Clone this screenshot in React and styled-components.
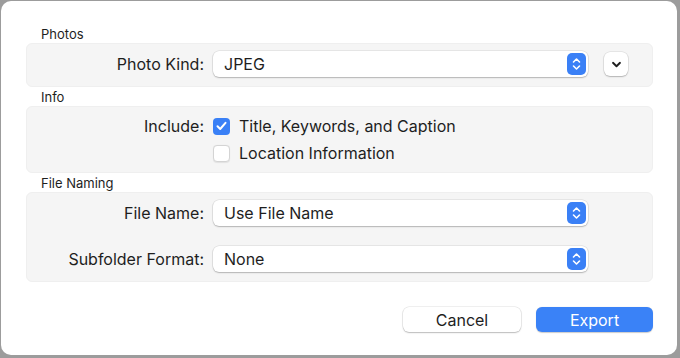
import React, { useState } from "react";
import styled, { createGlobalStyle } from "styled-components";

const GlobalStyle = createGlobalStyle`
  html, body {
    margin: 0;
    padding: 0;
    background: #9c9c9c;
    font-family: Inter, "Liberation Sans", sans-serif;
    -webkit-font-smoothing: antialiased;
  }
`;

const Dialog = styled.div`
  box-sizing: border-box;
  width: 676px;
  height: 354px;
  margin: 1px 0 0 1px;
  background: #ffffff;
  border-radius: 10px;
  padding: 25px 24px 0 25px;
  color: #1e1e1e;
`;

const SectionTitle = styled.div`
  font-size: 13px;
  line-height: 16px;
  padding-left: 15px;
  margin-bottom: 1px;
`;

const Group = styled.div`
  box-sizing: border-box;
  background: #f5f5f5;
  border: 1px solid #efefef;
  border-radius: 6px;
  padding: ${(p) => p.$pad || "7px 0 9px"};
  display: flex;
  flex-direction: column;
  gap: ${(p) => p.$gap || "0px"};
  margin-bottom: 2px;
`;

const Row = styled.div`
  display: grid;
  grid-template-columns: 177px max-content max-content;
  justify-content: start;
  align-items: center;
  column-gap: 9px;
  height: ${(p) => p.$h || "26px"};
`;

const Label = styled.div`
  font-size: 16px;
  text-align: right;
`;

const Popup = styled.div`
  box-sizing: border-box;
  width: 375px;
  height: 26px;
  background: #ffffff;
  border-radius: 6px;
  box-shadow: 0 0 0 0.5px rgba(0, 0, 0, 0.12), 0 1px 1.5px rgba(0, 0, 0, 0.22);
  display: flex;
  align-items: center;
  justify-content: space-between;
  padding: 0 2px 0 11px;
  font-size: 16px;
`;

const Stepper = styled.div`
  width: 19px;
  height: 22px;
  border-radius: 5px;
  background: #3a80f6;
  display: flex;
  align-items: center;
  justify-content: center;
`;

const SmallButton = styled.div`
  width: 24px;
  height: 24px;
  margin-left: 7px;
  background: #ffffff;
  border-radius: 6px;
  box-shadow: 0 0 0 0.5px rgba(0, 0, 0, 0.12), 0 1px 1.5px rgba(0, 0, 0, 0.22);
  display: flex;
  align-items: center;
  justify-content: center;
`;

const CheckLine = styled.label`
  display: flex;
  align-items: center;
  gap: 9px;
  font-size: 16px;
  cursor: default;
`;

const Box = styled.span`
  box-sizing: border-box;
  width: 17px;
  height: 17px;
  border-radius: 4px;
  display: flex;
  align-items: center;
  justify-content: center;
  background: ${(p) => (p.$on ? "#3a80f6" : "#ffffff")};
  border: ${(p) => (p.$on ? "none" : "1px solid #d4d4d4")};
  box-shadow: ${(p) => (p.$on ? "none" : "0 0.5px 1px rgba(0,0,0,0.08)")};
`;

const Footer = styled.div`
  display: flex;
  justify-content: flex-end;
  gap: 15px;
  margin-top: 25px;
`;

const Button = styled.button`
  box-sizing: border-box;
  width: ${(p) => p.$w};
  height: 25px;
  border-radius: 6px;
  border: none;
  font-family: inherit;
  font-size: 16px;
  padding: 0;
  color: ${(p) => (p.$primary ? "#ffffff" : "#1e1e1e")};
  background: ${(p) => (p.$primary ? "#3a82f7" : "#ffffff")};
  box-shadow: ${(p) =>
    p.$primary
      ? "0 0.5px 1px rgba(0,0,0,0.2)"
      : "0 0 0 0.5px rgba(0,0,0,0.12), 0 1px 1.5px rgba(0,0,0,0.22)"};
`;

const StepperIcon = () => (
  <svg width="9" height="14" viewBox="0 0 9 14" fill="none">
    <path d="M1.5 5 L4.5 2 L7.5 5" stroke="#fff" strokeWidth="1.6" strokeLinecap="round" strokeLinejoin="round" />
    <path d="M1.5 9 L4.5 12 L7.5 9" stroke="#fff" strokeWidth="1.6" strokeLinecap="round" strokeLinejoin="round" />
  </svg>
);

const Select = ({ value }) => (
  <Popup>
    <span>{value}</span>
    <Stepper>
      <StepperIcon />
    </Stepper>
  </Popup>
);

const Checkbox = ({ on, children, onToggle }) => (
  <CheckLine onClick={onToggle}>
    <Box $on={on}>
      {on && (
        <svg width="11" height="10" viewBox="0 0 11 10" fill="none">
          <path d="M1.5 5.3 L4.2 8 L9.5 1.8" stroke="#fff" strokeWidth="2" strokeLinecap="round" strokeLinejoin="round" />
        </svg>
      )}
    </Box>
    {children}
  </CheckLine>
);

const App = () => {
  const [title, setTitle] = useState(true);
  const [location, setLocation] = useState(false);

  return (
    <>
      <GlobalStyle />
      <Dialog>
        <SectionTitle>Photos</SectionTitle>
        <Group $pad="7px 0 9px">
          <Row>
            <Label>Photo Kind:</Label>
            <Select value="JPEG" />
            <SmallButton>
              <svg width="11" height="7" viewBox="0 0 11 7" fill="none">
                <path d="M2 1.8 L5.5 5.2 L9 1.8" stroke="#1e1e1e" strokeWidth="1.9" strokeLinecap="round" strokeLinejoin="round" />
              </svg>
            </SmallButton>
          </Row>
        </Group>

        <SectionTitle>Info</SectionTitle>
        <Group $pad="8px 0 8px" $gap="5px">
          <Row $h="22px">
            <Label>Include:</Label>
            <Checkbox on={title} onToggle={() => setTitle(!title)}>
              Title, Keywords, and Caption
            </Checkbox>
          </Row>
          <Row $h="22px">
            <span />
            <Checkbox on={location} onToggle={() => setLocation(!location)}>
              Location Information
            </Checkbox>
          </Row>
        </Group>

        <SectionTitle>File Naming</SectionTitle>
        <Group $pad="7px 0 9px" $gap="20px">
          <Row>
            <Label>File Name:</Label>
            <Select value="Use File Name" />
          </Row>
          <Row>
            <Label>Subfolder Format:</Label>
            <Select value="None" />
          </Row>
        </Group>

        <Footer>
          <Button $w="118px">Cancel</Button>
          <Button $w="117px" $primary>
            Export
          </Button>
        </Footer>
      </Dialog>
    </>
  );
};

export default App;
